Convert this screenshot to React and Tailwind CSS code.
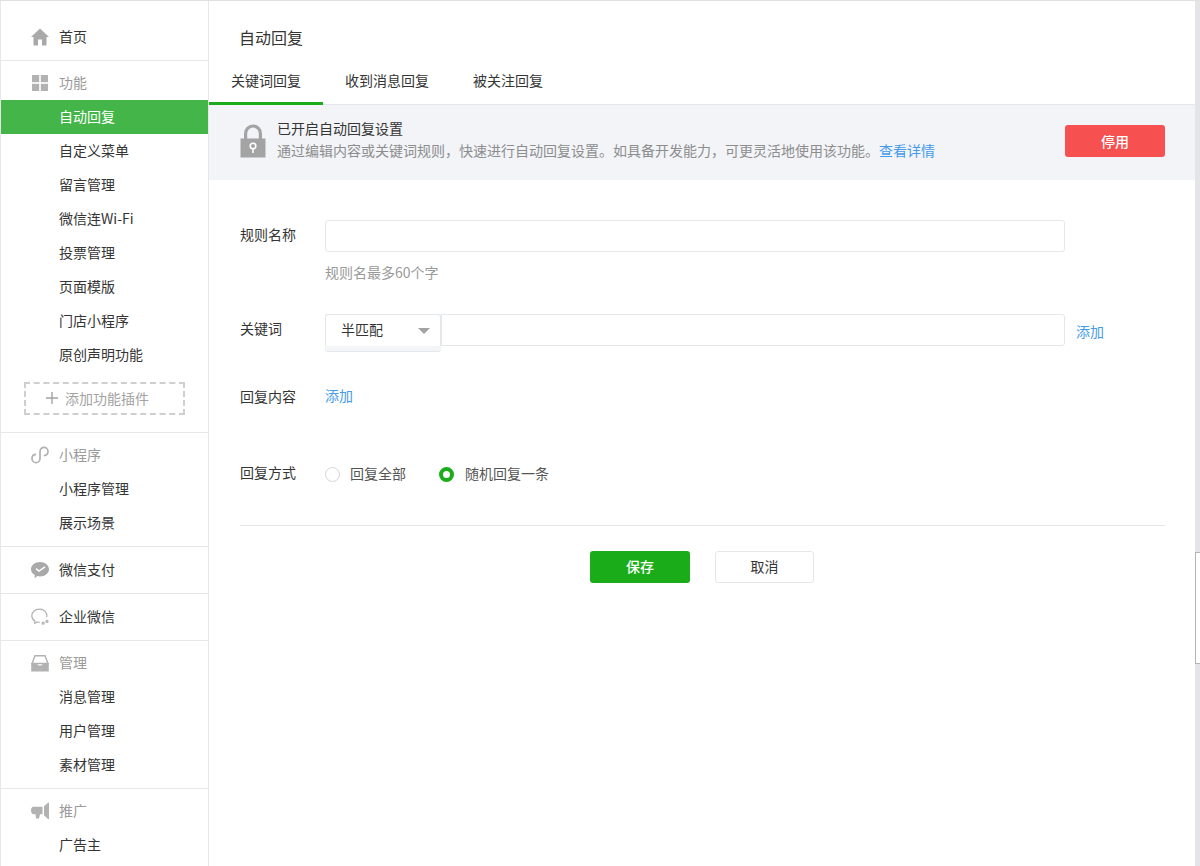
const Home = () => (
  <svg width="18" height="18" viewBox="0 0 18 18" fill="#a9a9a9">
    <path d="M9 0.5 L18 9 H15.5 V17.5 H11 V11.5 H7 V17.5 H2.5 V9 H0 Z" />
  </svg>
);

const Grid = () => (
  <svg width="18" height="18" viewBox="0 0 18 18" fill="#b2b2b2">
    <rect x="1" y="1" width="7.2" height="7.2" />
    <rect x="9.8" y="1" width="7.2" height="7.2" />
    <rect x="1" y="9.8" width="7.2" height="7.2" />
    <rect x="9.8" y="9.8" width="7.2" height="7.2" />
  </svg>
);

const Loop = () => (
  <svg width="18" height="18" viewBox="0 0 18 18" fill="none" stroke="#b2b2b2" strokeWidth="1.7" strokeLinecap="round">
    <path d="M4.4 8.4 C2.4 8.8 1 10.2 1 12.4 C1 14.8 2.8 16.6 5 16.6 C7.2 16.6 9 14.8 9 12.4 V5.6 C9 3.2 10.8 1.4 13 1.4 C15.2 1.4 17 3.2 17 5.6 C17 7.8 15.6 9.2 13.6 9.6" />
  </svg>
);

const Pay = () => (
  <svg width="18" height="18" viewBox="0 0 18 18">
    <path fill="#a9a9a9" d="M9 1 C14 1 18 4.2 18 8.2 C18 12.2 14 15.4 9 15.4 C8 15.4 7.2 15.3 6.4 15.1 L3.6 17.2 L3.7 13.9 C1.4 12.6 0 10.5 0 8.2 C0 4.2 4 1 9 1 Z" />
    <path fill="none" stroke="#fff" strokeWidth="1.5" d="M5 7.6 L8 10 L14 5.8" />
  </svg>
);

const Work = () => (
  <svg width="18" height="18" viewBox="0 0 18 18" fill="none" stroke="#b2b2b2" strokeWidth="1.2">
    <path d="M15.8 9 C16.6 4.6 13 1.2 8.6 1.2 C4.2 1.2 0.8 4 0.8 7.7 C0.8 9.9 2 11.8 3.9 13 L3.7 15.2 L6.2 14 C7 14.2 7.8 14.3 8.8 14.2" />
    <circle cx="12.2" cy="15.2" r="1" />
    <circle cx="16" cy="13.4" r="1" />
  </svg>
);

const Inbox = () => (
  <svg width="18" height="18" viewBox="0 0 18 18">
    <path fill="none" stroke="#b2b2b2" strokeWidth="1.4" d="M4 1.7 H14 L17 9.5 H1 Z" />
    <path fill="#b2b2b2" d="M0.2 9 H6 C6.2 10.6 7.4 11.6 9 11.6 C10.6 11.6 11.8 10.6 12 9 H17.8 V17.6 H0.2 Z" />
  </svg>
);

const Horn = () => (
  <svg width="18" height="18" viewBox="0 0 18 18" fill="#b2b2b2">
    <path d="M2.5 4.8 H11.5 V12.2 H9 L8 16.6 H5 L4.6 12.2 H2.5 C1 12.2 0 10.6 0 8.5 C0 6.4 1 4.8 2.5 4.8 Z" />
    <path d="M13 4.2 L17 0.8 H18 V17 H17 L13 13.2 Z" />
  </svg>
);

const Lock = () => (
  <svg width="26" height="34" viewBox="0 0 26 34">
    <path fill="none" stroke="#a3a3a3" strokeWidth="3.2" d="M5.6 15 V9.6 C5.6 5 9 2 13 2 C17 2 20.4 5 20.4 9.6 V15" />
    <rect x="0.5" y="14.5" width="25" height="19" fill="#a3a3a3" />
    <circle cx="13" cy="22" r="2.8" fill="none" stroke="#fff" strokeWidth="1.6" />
    <rect x="12.2" y="24" width="1.6" height="5" fill="#fff" />
  </svg>
);

const Plus = () => (
  <svg width="12" height="12" viewBox="0 0 12 12" stroke="#a3a3a3" strokeWidth="1.4">
    <path d="M6 0 V12 M0 6 H12" />
  </svg>
);

const Heading = ({ icon, children, dark }) => (
  <div className={`flex h-[34px] items-center pl-[30px] pb-[2px] ${dark ? "text-[#353535]" : "text-[#9a9a9a]"}`}>
    <span className="mr-[10px] mt-[2px] flex w-[18px] justify-center">{icon}</span>
    {children}
  </div>
);

const Item = ({ children, active }) => (
  <div className={`flex h-[34px] items-center pl-[58px] pb-[2px] ${active ? "bg-[#44b549] text-white" : "text-[#353535]"}`}>
    {children}
  </div>
);

const Sidebar = () => (
  <div className="w-[209px] shrink-0 border-x border-[#e7e7eb] text-sm">
    <div className="pt-[19px] pb-[6px]">
      <Heading icon={<Home />} dark>首页</Heading>
    </div>
    <div className="border-t border-[#e7e7eb] pt-[5px] pb-[17px]">
      <Heading icon={<Grid />}>功能</Heading>
      <Item active>自动回复</Item>
      <Item>自定义菜单</Item>
      <Item>留言管理</Item>
      <Item>微信连Wi-Fi</Item>
      <Item>投票管理</Item>
      <Item>页面模版</Item>
      <Item>门店小程序</Item>
      <Item>原创声明功能</Item>
      <div className="mt-[10px] ml-[23px] flex h-[33px] w-[161px] items-center gap-[7px] border-2 border-dashed border-[#cfcfcf] pb-[2px] pl-[20px] text-[#a3a3a3]">
        <Plus />
        添加功能插件
      </div>
    </div>
    <div className="border-t border-[#e7e7eb] pt-[5px] pb-[6px]">
      <Heading icon={<Loop />}>小程序</Heading>
      <Item>小程序管理</Item>
      <Item>展示场景</Item>
    </div>
    <div className="border-t border-[#e7e7eb] pt-[6px] pb-[6px]">
      <Heading icon={<Pay />} dark>微信支付</Heading>
    </div>
    <div className="border-t border-[#e7e7eb] pt-[6px] pb-[6px]">
      <Heading icon={<Work />} dark>企业微信</Heading>
    </div>
    <div className="border-t border-[#e7e7eb] pt-[5px] pb-[6px]">
      <Heading icon={<Inbox />}>管理</Heading>
      <Item>消息管理</Item>
      <Item>用户管理</Item>
      <Item>素材管理</Item>
    </div>
    <div className="border-t border-[#e7e7eb] pt-[5px]">
      <Heading icon={<Horn />}>推广</Heading>
      <Item>广告主</Item>
    </div>
  </div>
);

const Label = ({ children, up }) => (
  <div className={`w-[85px] shrink-0 leading-5 text-[#353535] ${up ? "pb-[4px]" : ""}`}>{children}</div>
);

const Main = () => (
  <div className="min-w-0 flex-1 text-sm text-[#353535]">
    <div className="pt-[25px] pl-[30px] text-base leading-[22px]">自动回复</div>
    <div className="mt-[19px] flex h-[38px] border-b border-[#e4e8eb] leading-5">
      <div className="-mb-px w-[114px] border-b-[3px] border-[#1aad19] pl-[22px] pt-[3px]">关键词回复</div>
      <div className="w-[127px] pl-[22px] pt-[3px]">收到消息回复</div>
      <div className="pl-[23px] pt-[3px]">被关注回复</div>
    </div>

    <div className="flex h-[75px] items-center bg-[#f2f4f8] pr-[30px] pb-[3px] pl-[31px]">
      <Lock />
      <div className="ml-[11px] mb-[5px] flex-1">
        <div className="leading-5">已开启自动回复设置</div>
        <div className="mt-[2px] leading-5 text-[#8d8d8d]">
          通过编辑内容或关键词规则，快速进行自动回复设置。如具备开发能力，可更灵活地使用该功能。
          <span className="text-[#459ae9]">查看详情</span>
        </div>
      </div>
      <div className="flex h-[32px] w-[100px] items-center justify-center rounded-[3px] bg-[#f65051] pb-[1px] font-medium text-white">停用</div>
    </div>

    <div className="pt-[40px] pr-[30px] pl-[31px]">
      <div className="flex items-center">
        <Label up>规则名称</Label>
        <div className="h-[32px] w-[740px] rounded-[3px] border border-[#e4e8eb] bg-white"></div>
      </div>
      <div className="mt-[10px] pl-[85px] leading-5 text-[#9a9a9a]">规则名最多60个字</div>

      <div className="mt-[32px] flex items-start">
        <div className="flex h-[32px] items-center">
          <Label up>关键词</Label>
        </div>
        <div className="h-[38px] w-[116px] rounded-b-[3px] border-b border-[#e4e8eb] bg-[#f4f5f9]">
          <div className="flex h-[32px] items-center justify-between rounded-t-[3px] border-x border-t border-[#e4e8eb] bg-white pr-[10px] pl-[15px]">
            <span className="mb-[4px]">半匹配</span>
            <span className="h-0 w-0 border-x-[6.5px] border-t-[6px] border-x-transparent border-t-[#a3a3a3]"></span>
          </div>
        </div>
        <div className="h-[32px] w-[624px] rounded-r-[3px] border border-[#e4e8eb] bg-white"></div>
        <div className="mt-[7px] ml-[11px] leading-5 text-[#459ae9]">添加</div>
      </div>

      <div className="mt-[34px] flex items-start">
        <Label>回复内容</Label>
        <div className="-mt-px leading-5 text-[#459ae9]">添加</div>
      </div>

      <div className="mt-[55px] flex items-center">
        <Label>回复方式</Label>
        <div className="flex items-center pt-[2px] leading-5">
          <span className="mt-[2px] h-[15px] w-[15px] rounded-full border border-[#d5d5d5] bg-white"></span>
          <span className="ml-[10px] w-[89px] text-[#555555]">回复全部</span>
          <span className="mt-[2px] h-[15px] w-[15px] rounded-full border-[4px] border-[#1aad19] bg-white"></span>
          <span className="ml-[11px] text-[#555555]">随机回复一条</span>
        </div>
      </div>

      <div className="mt-[42px] border-t border-[#e7e7eb]"></div>

      <div className="mt-[25px] flex justify-center gap-[25px] pr-[1px]">
        <div className="flex h-[32px] w-[100px] items-center justify-center rounded-[3px] bg-[#1aad19] pb-[2px] font-medium text-white">保存</div>
        <div className="flex h-[32px] w-[99px] items-center justify-center rounded-[3px] border border-[#e4e8eb] bg-white pb-[2px]">取消</div>
      </div>
    </div>
  </div>
);

export default function App() {
  return (
    <div className="flex h-[866px] overflow-hidden border-t border-[#e0e0e0] bg-white font-['Noto_Sans_CJK_SC','Liberation_Sans',sans-serif]">
      <Sidebar />
      <Main />
      <div className="w-[5px] shrink-0 bg-[#e4e5e7]">
        <div className="mt-[551px] h-[112px] border-y border-l border-[#b4b4b4] bg-white"></div>
      </div>
    </div>
  );
}
